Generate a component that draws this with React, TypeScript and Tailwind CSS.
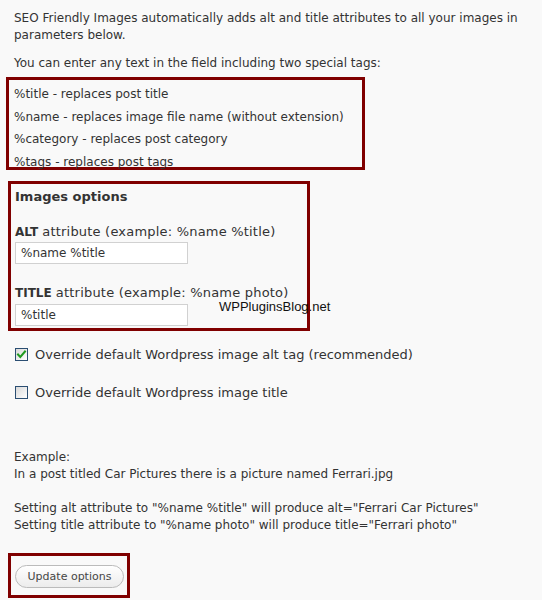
export default function App() {
  const Check = ({ checked }: { checked?: boolean }) => (
    <span className="relative block w-[13px] h-[13px] border border-[#2b4e72] bg-linear-to-br from-[#d9d9d9] to-white shrink-0">
      {checked && (
        <svg className="absolute left-0 top-0" width="11" height="11" viewBox="0 0 11 11">
          <path d="M2 5.5 L4.3 8 L9 2.5" fill="none" stroke="#1f9a1f" strokeWidth="2" strokeLinecap="square" />
        </svg>
      )}
    </span>
  );

  return (
    <div className="relative w-full h-[600px] overflow-hidden bg-[#f9f9f9] text-[#333] text-[12px] leading-[17px] font-['DejaVu_Sans',Verdana,sans-serif] pt-[10px]">
      <p className="ml-[14px] whitespace-nowrap">
        SEO Friendly Images automatically adds alt and title attributes to all your images in
        <br />
        parameters below.
      </p>
      <p className="ml-[14px] mt-[11px] whitespace-nowrap">You can enter any text in the field including two special tags:</p>

      <div className="ml-[6px] mt-[5px] w-[359px] h-[93px] border-[3px] border-[#800000] pl-[5px] pt-[6px] flex flex-col gap-[5.6px] whitespace-nowrap">
        <div>%title - replaces post title</div>
        <div>%name - replaces image file name (without extension)</div>
        <div>%category - replaces post category</div>
        <div>%tags - replaces post tags</div>
      </div>

      <div className="ml-[8px] mt-[11px] w-[302px] h-[150px] border-[3px] border-[#800000] pl-[4px] pt-[4px] whitespace-nowrap">
        <div className="font-bold text-[13px]">Images options</div>
        <div className="mt-[18px] text-[13px]">
          <b className="text-[12px]">ALT</b> <span className="tracking-[0.2px]">attribute (example: %name %title)</span>
        </div>
        <input
          readOnly
          value="%name %title"
          className="block mt-[1px] w-[173px] h-[22px] border border-[#d1d1d1] bg-white px-[5px] text-[12px] text-[#333] outline-none font-['DejaVu_Sans',Verdana,sans-serif]"
        />
        <div className="mt-[21px] text-[13px] leading-[15px]">
          <b className="text-[12px]">TITLE</b> <span className="tracking-[0.2px]">attribute (example: %name photo)</span>
        </div>
        <input
          readOnly
          value="%title"
          className="block mt-[3px] w-[173px] h-[22px] border border-[#d1d1d1] bg-white px-[5px] text-[12px] text-[#333] outline-none font-['DejaVu_Sans',Verdana,sans-serif]"
        />
      </div>

      <div className="ml-[15px] mt-[15px] h-[17px] flex items-center gap-[7px] whitespace-nowrap text-[13px]">
        <Check checked />
        <span>Override default Wordpress image alt tag (recommended)</span>
      </div>
      <div className="ml-[15px] mt-[21px] h-[17px] flex items-center gap-[7px] whitespace-nowrap text-[13px]">
        <Check />
        <span>Override default Wordpress image title</span>
      </div>

      <div className="ml-[14px] mt-[48px] whitespace-nowrap">
        <div>Example:</div>
        <div>In a post titled Car Pictures there is a picture named Ferrari.jpg</div>
        <div className="h-[17px]" />
        <div>Setting alt attribute to "%name %title" will produce alt="Ferrari Car Pictures"</div>
        <div>Setting title attribute to "%name photo" will produce title="Ferrari photo"</div>
      </div>

      <div className="ml-[8px] mt-[19px] w-[122px] h-[45px] border-[3px] border-[#800000] pl-[4px] pt-[9px]">
        <button className="block w-[109px] h-[23px] rounded-full border border-[#bbbbbb] bg-linear-to-b from-white to-[#ececec] text-[11px] leading-[21px] text-[#464646] font-['DejaVu_Sans',Verdana,sans-serif]">
          Update options
        </button>
      </div>

      <div className="absolute left-[219px] top-[301px] text-[13px] leading-[12px] text-[#111] font-['Liberation_Sans',Arial,sans-serif] whitespace-nowrap">
        WPPluginsBlog.net
      </div>
    </div>
  );
}
